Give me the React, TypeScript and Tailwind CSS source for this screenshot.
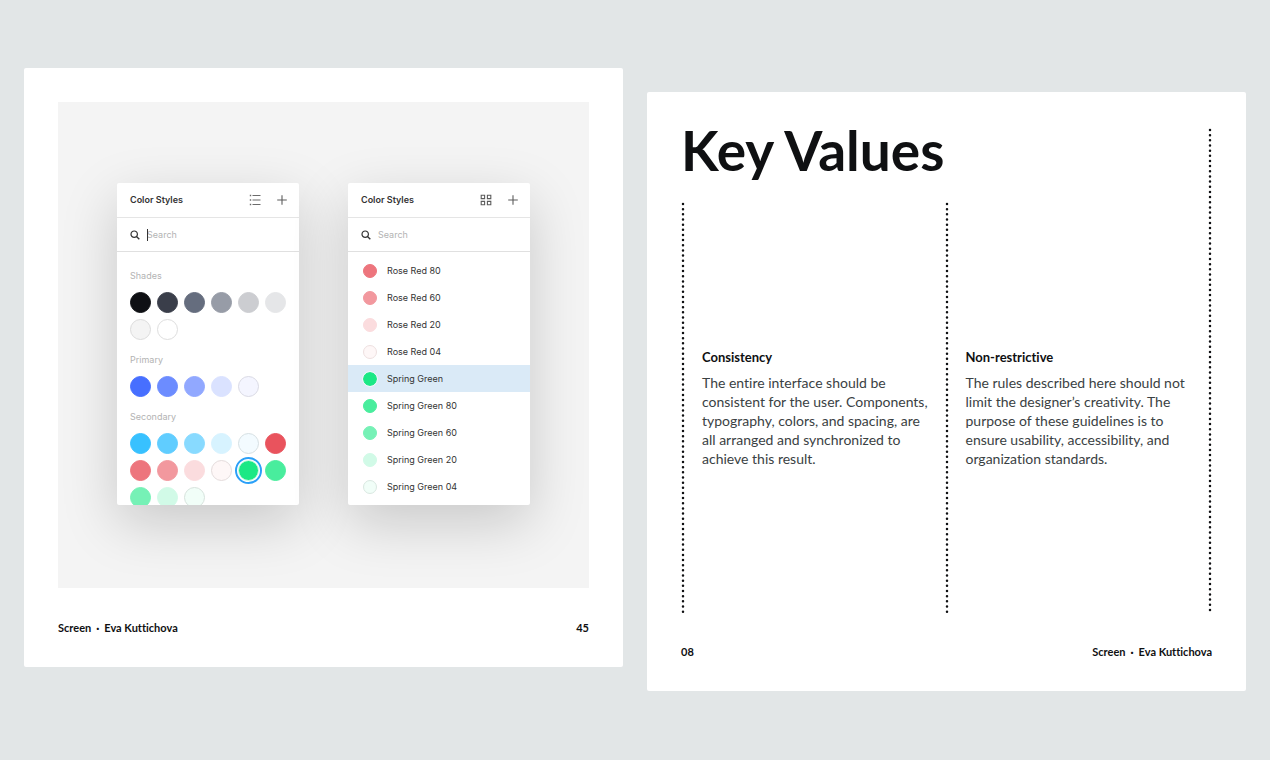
import type { ReactNode } from "react";

const groups = [
  {
    name: "Shades",
    colors: [
      { name: "Shade 100", hex: "#0f1014" },
      { name: "Shade 90", hex: "#3a3e4a" },
      { name: "Shade 70", hex: "#656d7e" },
      { name: "Shade 50", hex: "#979ca7" },
      { name: "Shade 30", hex: "#cccdd1" },
      { name: "Shade 20", hex: "#e5e6e8" },
      { name: "Shade 10", hex: "#f4f4f4", ring: "#dcdcdc" },
      { name: "White", hex: "#ffffff", ring: "#dedede" },
    ],
  },
  {
    name: "Primary",
    colors: [
      { name: "Blue", hex: "#476fff" },
      { name: "Blue 80", hex: "#6c8cff" },
      { name: "Blue 60", hex: "#91a8ff" },
      { name: "Blue 20", hex: "#dae2ff" },
      { name: "Blue 04", hex: "#f4f5ff", ring: "#d9d9e4" },
    ],
  },
  {
    name: "Secondary",
    colors: [
      { name: "Sky", hex: "#38c1ff" },
      { name: "Sky 80", hex: "#60cdff" },
      { name: "Sky 60", hex: "#88daff" },
      { name: "Sky 20", hex: "#d7f3ff" },
      { name: "Sky 04", hex: "#f3fbff", ring: "#d5dfe2" },
      { name: "Rose Red", hex: "#e9535d" },
      { name: "Rose Red 80", hex: "#ed757d" },
      { name: "Rose Red 60", hex: "#f2989e" },
      { name: "Rose Red 20", hex: "#fbdcde" },
      { name: "Rose Red 04", hex: "#fef7f7", ring: "#e4dcdc" },
      { name: "Spring Green", hex: "#1be885", ring: "#d1fae7", selected: true },
      { name: "Spring Green 80", hex: "#49ed9d" },
      { name: "Spring Green 60", hex: "#76f1b6" },
      { name: "Spring Green 20", hex: "#d1fae7" },
      { name: "Spring Green 04", hex: "#f1fef8", ring: "#d6e2dc" },
    ],
  },
];

const list = [
  { name: "Rose Red 80", hex: "#ed757d" },
  { name: "Rose Red 60", hex: "#f2989e" },
  { name: "Rose Red 20", hex: "#fbdcde" },
  { name: "Rose Red 04", hex: "#fef7f7", ring: "#eee0e0" },
  { name: "Spring Green", hex: "#1be885", selected: true },
  { name: "Spring Green 80", hex: "#49ed9d" },
  { name: "Spring Green 60", hex: "#76f1b6" },
  { name: "Spring Green 20", hex: "#d1fae7" },
  { name: "Spring Green 04", hex: "#f1fef8", ring: "#d9e8e1" },
];

const values = [
  {
    title: "Consistency",
    text: "The entire interface should be consistent for the user. Components, typography, colors, and spacing, are all arranged and synchronized to achieve this result.",
  },
  {
    title: "Non-restrictive",
    text: "The rules described here should not limit the designer’s creativity. The purpose of these guidelines is to ensure usability, accessibility, and organization standards.",
  },
];

function ListIcon() {
  return (
    <svg width="12" height="12" viewBox="0 0 12 12" fill="none" stroke="#6b6b6b">
      <path d="M3.5 1.5H11.5M3.5 6H11.5M3.5 10.5H11.5" strokeWidth="1.1" />
      <path d="M.8 1.5H2.2M.8 6H2.2M.8 10.5H2.2" strokeWidth="1.3" />
    </svg>
  );
}

function GridIcon() {
  return (
    <svg width="12" height="12" viewBox="0 0 12 12" fill="none" stroke="#5c5c5c" strokeWidth="1.1">
      <path d="M1.2 1.2h3.4v3.4H1.2zM7.4 1.2h3.4v3.4H7.4zM1.2 7.4h3.4v3.4H1.2zM7.4 7.4h3.4v3.4H7.4z" />
    </svg>
  );
}

function PlusIcon() {
  return (
    <svg width="10" height="10" viewBox="0 0 10 10" fill="none" stroke="#5c5c5c" strokeWidth="1.1">
      <path d="M5 .2v9.6M.2 5h9.6" />
    </svg>
  );
}

function SearchIcon() {
  return (
    <svg width="10" height="10" viewBox="0 0 10 10" fill="none" stroke="#333" strokeWidth="1.2">
      <circle cx="4.2" cy="4.2" r="3.2" />
      <path d="M6.5 6.5l2.8 2.8" strokeWidth="1.4" />
    </svg>
  );
}

function DottedLine() {
  return (
    <svg className="w-1 shrink-0 self-stretch" aria-hidden="true">
      <line
        x1="2"
        y1="2"
        x2="2"
        y2="100%"
        stroke="#0f1012"
        strokeWidth="2.5"
        strokeLinecap="round"
        strokeDasharray="0 5.16"
      />
    </svg>
  );
}

function Panel({ id, icon, iconLabel, focused, children }: {
  id: string;
  icon: ReactNode;
  iconLabel: string;
  focused?: boolean;
  children: ReactNode;
}) {
  return (
    <section className="w-[182px] h-[322px] rounded-xs bg-white font-['Inter',sans-serif] text-[9px] text-[#333] shadow-[0_18px_56px_rgba(0,0,0,0.18)]">
      <div className="h-full overflow-hidden rounded-xs">
        <header className="flex h-[35px] items-center border-b border-[#e5e5e5] pl-[13px] pr-3">
          <h2 className="flex-1 font-semibold">Color Styles</h2>
          <button aria-label={iconLabel} className="mr-4">{icon}</button>
          <button aria-label="Add style"><PlusIcon /></button>
        </header>
        <div className="flex h-[34px] items-center gap-[7px] border-b border-[#e0e0e0] pl-[13px]">
          <label htmlFor={id}><SearchIcon /></label>
          <div className="relative flex-1">
            <input
              id={id}
              type="text"
              aria-label="Search"
              placeholder="Search"
              className="block w-full h-4 outline-none placeholder:text-[#b3b3b3]"
            />
            {focused && <span className="absolute left-0 top-0.5 h-3 w-px bg-[#333]" />}
          </div>
        </div>
        {children}
      </div>
    </section>
  );
}

function Author() {
  return (
    <span>
      Screen<span className="mx-[5px] font-black">·</span>Eva Kuttichova
    </span>
  );
}

export default function App() {
  return (
    <main className="grid min-h-screen grid-cols-2 content-center items-start gap-6 bg-[#e2e6e7] px-6 pb-px font-['Lato',sans-serif] text-[#0f1012] [font-variant-ligatures:none]">
      <article className="flex aspect-square flex-col gap-8 rounded-xs bg-white px-[34px] pt-[34px] pb-[31px]">
        <div className="flex flex-1 items-center justify-center gap-[49px] bg-[#f4f4f4] pb-0.5">
          <Panel id="search-grid" icon={<ListIcon />} iconLabel="Show as list" focused>
            <div className="flex flex-col gap-3 px-[13px] pt-4">
              {groups.map((group) => (
                <div key={group.name}>
                  <h3 className="mb-2 leading-4 text-[#b3b3b3]">{group.name}</h3>
                  <div className="flex flex-wrap gap-1.5">
                    {group.colors.map((color) => (
                      <button
                        key={color.name}
                        aria-label={color.name}
                        className={
                          color.selected
                            ? "size-[21px] rounded-full border outline-2 outline-offset-1 outline-[#2ba0f8]"
                            : "size-[21px] rounded-full border"
                        }
                        style={{ backgroundColor: color.hex, borderColor: color.ring ?? color.hex }}
                      />
                    ))}
                  </div>
                </div>
              ))}
            </div>
          </Panel>

          <Panel id="search-list" icon={<GridIcon />} iconLabel="Show as grid">
            <ul className="pt-[5px]">
              {list.map((color) => (
                <li key={color.name}>
                  <button
                    className={
                      color.selected
                        ? "flex h-[27px] w-full items-center gap-[10px] bg-[#daeaf7] pl-[15px]"
                        : "flex h-[27px] w-full items-center gap-[10px] pl-[15px]"
                    }
                  >
                    <span
                      className={
                        color.selected
                          ? "size-[14px] rounded-full border outline-1 outline-[#eef8f8]"
                          : "size-[14px] rounded-full border"
                      }
                      style={{ backgroundColor: color.hex, borderColor: color.ring ?? color.hex }}
                    />
                    {color.name}
                  </button>
                </li>
              ))}
            </ul>
          </Panel>
        </div>
        <footer className="flex justify-between text-[11px] leading-4 font-bold">
          <Author />
          <span>45</span>
        </footer>
      </article>

      <article className="mt-6 flex aspect-square flex-col gap-[31px] rounded-xs bg-white px-[34px] pt-9 pb-[31px]">
        <div className="flex flex-1">
          <div className="flex flex-1 flex-col">
            <h1 className="h-[74px] text-[55px] leading-[44px] font-bold">Key Values</h1>
            <div className="grid flex-1 grid-cols-2">
              {values.map((value) => (
                <section key={value.title} className="flex items-center gap-[17px]">
                  <DottedLine />
                  <div className="pr-4">
                    <h2 className="mb-[7px] text-[13px] leading-[18px] font-bold">{value.title}</h2>
                    <p className="text-[14px] leading-[19px] text-[#3a4143]">{value.text}</p>
                  </div>
                </section>
              ))}
            </div>
          </div>
          <DottedLine />
        </div>
        <footer className="flex justify-between text-[11px] leading-4 font-bold">
          <span>08</span>
          <Author />
        </footer>
      </article>
    </main>
  );
}
